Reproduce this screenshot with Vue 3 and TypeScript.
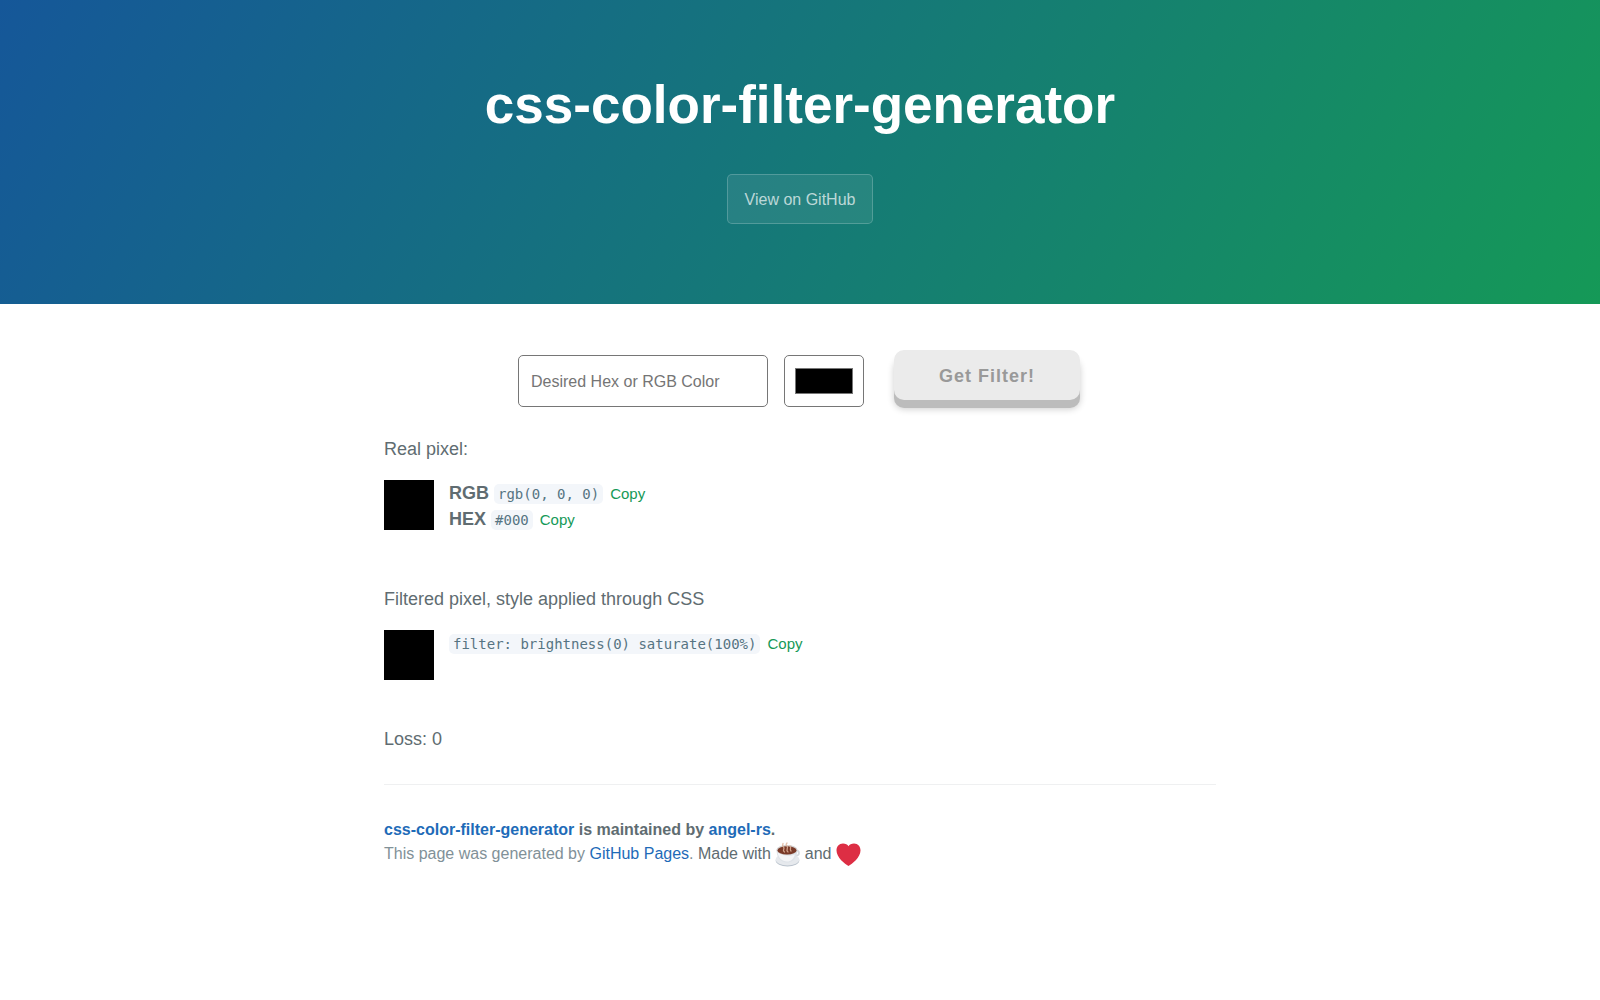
<script setup lang="ts">
import { ref } from 'vue'

const typed = ref('')
const picked = ref('#000000')
const rgb = 'rgb(0, 0, 0)'
const hex = '#000'
const filter = 'filter: brightness(0) saturate(100%)'
const loss = 0

function copy(value: string) {
  navigator.clipboard?.writeText(value)
}
</script>

<template>
  <div class="page">
    <header class="hero">
      <h1>css-color-filter-generator</h1>
      <a href="#" class="hero-link">View on GitHub</a>
    </header>

    <main class="content">
      <form class="picker" @submit.prevent>
        <input v-model="typed" class="field" type="text" aria-label="Desired color" placeholder="Desired Hex or RGB Color" />
        <input v-model="picked" class="color" type="color" aria-label="Pick a color" />
        <button class="submit" type="submit" disabled>Get Filter!</button>
      </form>

      <section class="result">
        <p>Real pixel:</p>
        <div class="row">
          <div class="pixel"></div>
          <div class="details">
            <div><strong>RGB</strong> <code>{{ rgb }}</code> <button class="copy" type="button" @click="copy(rgb)">Copy</button></div>
            <div><strong>HEX</strong> <code>{{ hex }}</code> <button class="copy" type="button" @click="copy(hex)">Copy</button></div>
          </div>
        </div>
      </section>

      <section class="result">
        <p>Filtered pixel, style applied through CSS</p>
        <div class="row">
          <div class="pixel filtered"></div>
          <div class="details">
            <div><code>{{ filter }}</code> <button class="copy" type="button" @click="copy(filter)">Copy</button></div>
          </div>
        </div>
      </section>

      <p class="loss">Loss: {{ loss }}</p>

      <footer class="footer">
        <div class="owner"><a href="#">css-color-filter-generator</a> is maintained by <a href="#">angel-rs</a>.</div>
        <div class="credits">
          <span class="muted">This page was generated by <a href="#">GitHub Pages</a>.</span>
          Made with
          <svg class="emoji" viewBox="0 0 25 25" role="img" aria-label="coffee">
            <ellipse cx="12.500" cy="18.500" rx="11.800" ry="6" fill="#b9c2cc" />
            <ellipse cx="12.500" cy="17.500" rx="11.800" ry="6" fill="#e6e9ed" />
            <circle cx="21.500" cy="11" r="2.500" fill="none" stroke="#d5d9de" stroke-width="1.600" />
            <path d="M1.500 7.500c0 8 4 13 10.500 13s10.500-5 10.500-13z" fill="#dfe3e8" />
            <path d="M2.500 10c1 6 4.500 9.500 9.500 9.500 4 0 6.500-2.500 8-7-5 2-12 2-17.500-2.500z" fill="#f4f5f7" />
            <ellipse cx="12" cy="8" rx="10.500" ry="5" fill="#d2d0d0" />
            <ellipse cx="12" cy="8.400" rx="9.500" ry="4.200" fill="#7a3a28" />
            <path d="M9.500 10c-3-2 1-3-1-5S8 3 8 1.500M13 10c-3-2 1-4-1-6s0-2 0-3M16 9c-2-2 1-3-1-5" fill="none" stroke="#dfb59c" stroke-width="1.300" stroke-linecap="round" opacity=".85" />
          </svg>
          and
          <svg class="emoji" viewBox="0 0 25 25" role="img" aria-label="love">
            <path d="M12.500 24C9 22 .5 15.500.5 8.500.5 4.500 3 1.500 7 1.500c2.500 0 4.500 1 5.500 2.800C13.500 2.500 15.500 1.500 18 1.500c4 0 6.500 3 6.500 7C24.500 15.500 16 22 12.500 24z" fill="#dd2e44" />
          </svg>
        </div>
      </footer>
    </main>
  </div>
</template>

<style>
body {
  margin: 0;
  background: #fff;
}
</style>

<style scoped>
.page {
  color: #606c71;
  font-family: "Liberation Sans", Arial, sans-serif;
  font-size: 18px;
  line-height: 26px;
}

a {
  color: #1e6bb8;
  text-decoration: none;
}

p {
  margin: 0;
}

.hero {
  display: flex;
  flex-direction: column;
  align-items: center;
  gap: 37px;
  padding: 73px 16px 80px;
  background-color: #159957;
  background-image: linear-gradient(120deg, #155799, #159957);
}

h1 {
  margin: 0;
  color: #fff;
  font-size: 53px;
  line-height: 64px;
}

.hero-link {
  padding: 13px 17px 11px;
  border: 1px solid rgba(255, 255, 255, 0.2);
  border-radius: 5px;
  background: rgba(255, 255, 255, 0.08);
  color: rgba(255, 255, 255, 0.7);
  font-size: 16px;
  line-height: 24px;
}

.content {
  max-width: 832px;
  margin: 0 auto;
  padding: 46px 16px;
}

.picker {
  display: flex;
  justify-content: center;
  align-items: flex-end;
  margin-bottom: 29px;
  padding-right: 2px;
}

.field,
.color {
  box-sizing: border-box;
  height: 52px;
  margin: 0;
  border: 1px solid #767676;
  border-radius: 5px;
  background: #fff;
}

.field {
  width: 250px;
  margin-right: 16px;
  padding: 1px 12px 0;
  color: #606c71;
  font: 16px "Liberation Sans", Arial, sans-serif;
}

.field::placeholder {
  color: #757575;
}

.color {
  width: 80px;
  margin-right: 30px;
  padding: 12px 10px;
}

.color::-webkit-color-swatch-wrapper {
  padding: 0;
}

.color::-webkit-color-swatch {
  border: 1px solid #777;
}

.submit {
  width: 186px;
  height: 50px;
  margin-bottom: 7px;
  padding: 3px 0 0;
  border: 0;
  border-radius: 10px;
  background: #ebebeb;
  box-shadow: 0 8px 0 #bcbcbc, 0 9px 7px rgba(0, 0, 0, 0.2);
  color: #999;
  font: bold 18px "Liberation Sans", Arial, sans-serif;
  letter-spacing: 1px;
}

.result {
  margin-bottom: 54px;
}

.row {
  display: flex;
  gap: 15px;
  margin-top: 18px;
}

.pixel {
  width: 50px;
  height: 50px;
  background: #000;
}

.filtered {
  filter: brightness(0) saturate(100%);
}

code {
  padding: 2px 4px;
  border-radius: 5px;
  background: #f3f6fa;
  color: #567482;
  font: 14px "DejaVu Sans Mono", monospace;
}

.copy {
  margin-left: 2px;
  padding: 0;
  border: 0;
  background: none;
  color: #159957;
  font: 15px "Liberation Sans", Arial, sans-serif;
  cursor: pointer;
}

.loss {
  margin-top: -8px;
}

.footer {
  margin-top: 32px;
  padding-top: 33px;
  border-top: 1px solid #eff0f1;
  font-size: 16px;
  line-height: 24px;
}

.owner {
  font-weight: bold;
}

.muted {
  color: #819198;
}

.emoji {
  width: 25px;
  height: 25px;
  margin: -4px 0;
  vertical-align: middle;
}
</style>
